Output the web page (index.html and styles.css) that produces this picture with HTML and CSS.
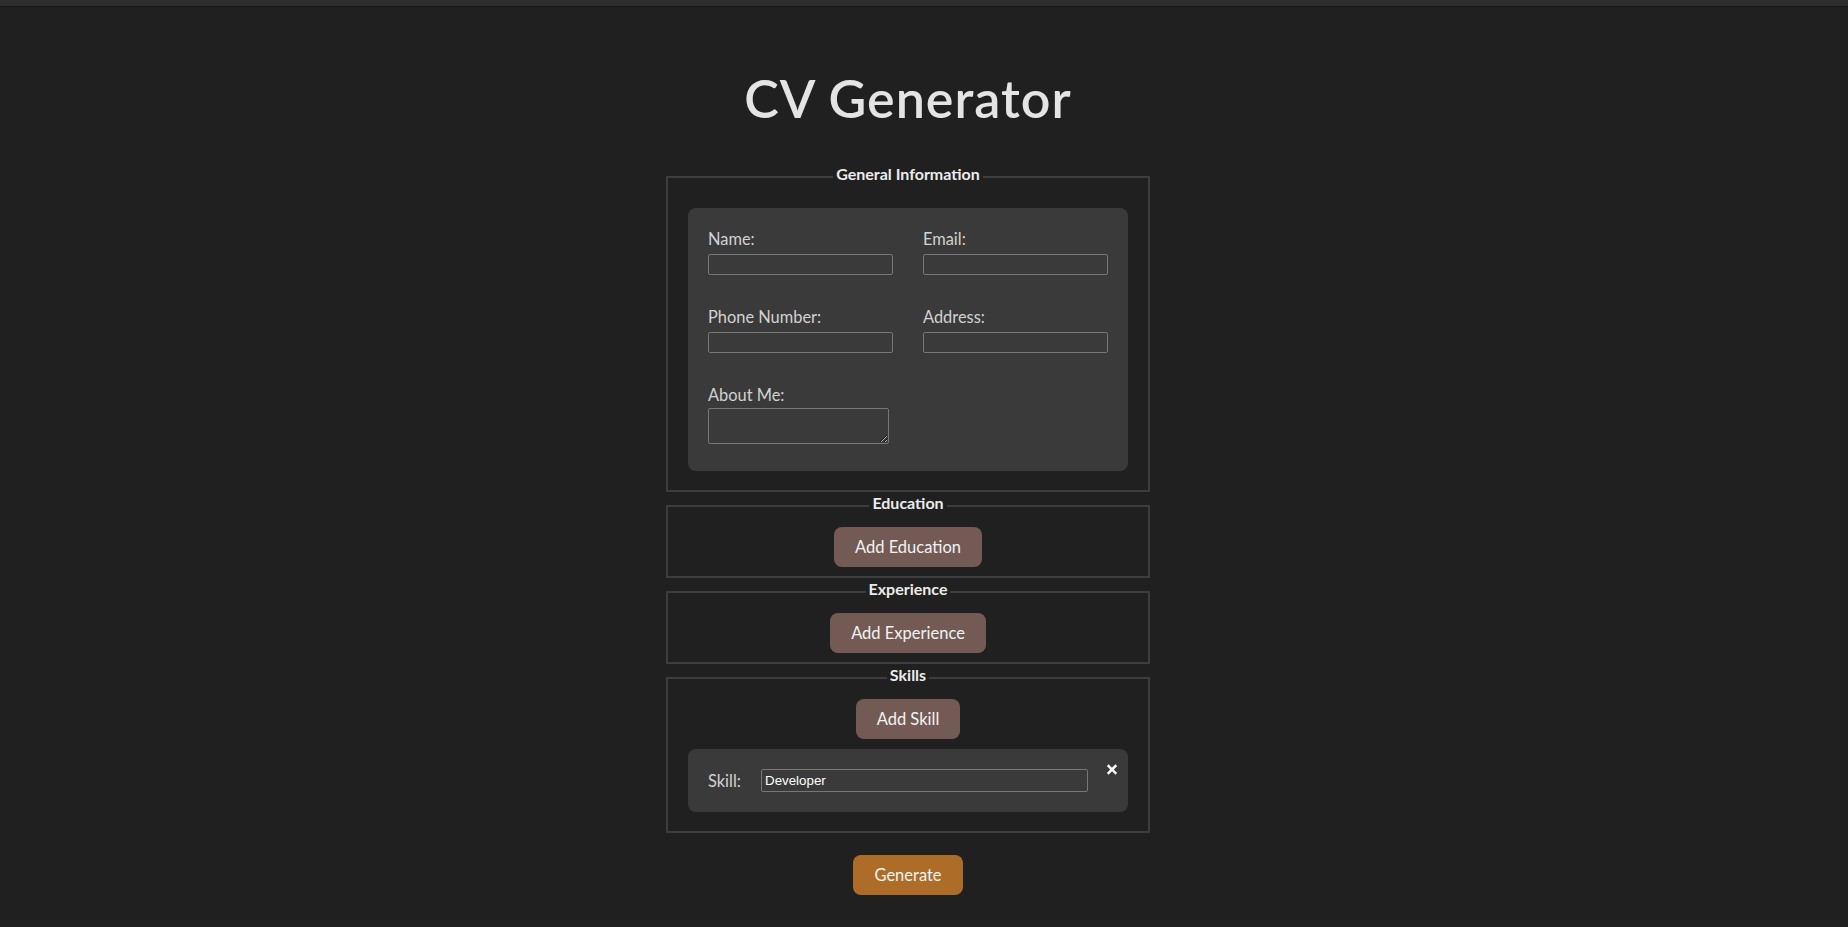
FILE: index.html
```html
<!DOCTYPE html>
<html lang="en">
<head>
<meta charset="utf-8">
<title>CV Generator</title>
<link rel="stylesheet" href="styles.css">
</head>
<body>
<div class="topbar"></div>
<main class="page">
  <h1 class="title">CV Generator</h1>
  <form class="cv-form">
    <fieldset class="section">
      <legend class="section-title">General Information</legend>
      <div class="card general-grid">
        <div class="field">
          <label class="field-label" for="name">Name:</label>
          <input class="text-input" id="name" type="text">
        </div>
        <div class="field">
          <label class="field-label" for="email">Email:</label>
          <input class="text-input" id="email" type="text">
        </div>
        <div class="field">
          <label class="field-label" for="phone">Phone Number:</label>
          <input class="text-input" id="phone" type="text">
        </div>
        <div class="field">
          <label class="field-label" for="address">Address:</label>
          <input class="text-input" id="address" type="text">
        </div>
        <div class="field">
          <label class="field-label" for="about">About Me:</label>
          <textarea class="text-area" id="about"></textarea>
        </div>
      </div>
    </fieldset>

    <fieldset class="section">
      <legend class="section-title">Education</legend>
      <div class="actions"><button type="button" class="btn btn-add">Add Education</button></div>
    </fieldset>

    <fieldset class="section">
      <legend class="section-title">Experience</legend>
      <div class="actions"><button type="button" class="btn btn-add">Add Experience</button></div>
    </fieldset>

    <fieldset class="section">
      <legend class="section-title">Skills</legend>
      <div class="actions"><button type="button" class="btn btn-add">Add Skill</button></div>
      <div class="card skill-card">
        <label class="field-label skill-label" for="skill1">Skill:</label>
        <input class="text-input skill-input" id="skill1" type="text" value="Developer">
        <button type="button" class="remove-btn" aria-label="Remove">
          <svg viewBox="0 0 10 11" width="10" height="11"><path d="M1.6 2.1 L8.4 8.9 M8.4 2.1 L1.6 8.9" stroke="#ffffff" stroke-width="2.5" stroke-linecap="square" fill="none"/></svg>
        </button>
      </div>
    </fieldset>

    <div class="actions generate-row"><button type="button" class="btn btn-generate">Generate</button></div>
  </form>
</main>
</body>
</html>
```

FILE: styles.css
```css
html, body {
  margin: 0;
  padding: 0;
  background: #202020;
}

body {
  font-family: Lato, "Noto Sans", sans-serif;
  color: #e2e2e2;
  min-height: 927px;
}

.topbar {
  height: 6px;
  background: #2e2e2e;
  border-bottom: 1px solid #181818;
}

.page {
  width: calc(100% - 32px);
  display: flex;
  flex-direction: column;
  align-items: center;
}

.title {
  font-size: 52px;
  line-height: 60px;
  font-weight: 600;
  letter-spacing: 1px;
  color: #e4e4e4;
  margin: 61px 0 39px;
}

.cv-form {
  width: 484px;
  display: flex;
  flex-direction: column;
  gap: 4px;
}

.section {
  margin: 0;
  border: 2px solid #3d3d3d;
  padding: 12px 20px 9px;
  min-width: 0;
}

.section-title {
  margin: 0 auto;
  padding: 0 3px 5px;
  font-size: 16px;
  line-height: 14px;
  font-weight: 700;
  color: #ececec;
}

.card {
  background: #3a3a3a;
  border-radius: 8px;
  padding: 20px;
  margin: 10px 0;
}

.general-grid {
  display: grid;
  grid-template-columns: 1fr 1fr;
  column-gap: 30px;
  row-gap: 31px;
}

.field {
  display: flex;
  flex-direction: column;
  align-items: flex-start;
}

.field-label {
  font-size: 16.4px;
  line-height: 21px;
  color: #d2d2d2;
  margin-bottom: 5px;
}

.text-input {
  box-sizing: border-box;
  width: 100%;
  height: 21px;
  margin: 0;
  padding: 1px 3px;
  background: transparent;
  border: 1px solid #777777;
  border-radius: 2px;
  color: #ffffff;
  font-family: "Liberation Sans", Arial, sans-serif;
  font-size: 13.33px;
}

.text-area {
  box-sizing: border-box;
  display: block;
  width: 181px;
  height: 36px;
  margin: -2px 0 7px;
  background: transparent;
  border: 1px solid #777777;
  border-radius: 2px;
  color: #ffffff;
  font-family: "Liberation Mono", monospace;
  font-size: 13px;
}

.actions {
  display: flex;
  justify-content: center;
}

.btn {
  height: 40px;
  padding: 0 21px;
  border: none;
  border-radius: 8px;
  font-family: Lato, "Noto Sans", sans-serif;
  font-size: 16.5px;
  color: #f2f2f2;
  cursor: pointer;
}

.btn-add {
  background: #735a55;
}

.btn-generate {
  background: #ad6d29;
}

.generate-row {
  margin-top: 18px;
}

.skill-card {
  position: relative;
  display: flex;
  align-items: center;
  padding: 20px 40px 20px 20px;
}

.skill-label {
  width: 33px;
  margin: 0 20px 0 0;
  flex: none;
}

.skill-input {
  flex: 1;
  height: 23px;
}

.remove-btn {
  position: absolute;
  top: 15px;
  right: 11px;
  width: 10px;
  height: 11px;
  padding: 0;
  margin: 0;
  border: none;
  background: transparent;
  display: flex;
  cursor: pointer;
}
```
